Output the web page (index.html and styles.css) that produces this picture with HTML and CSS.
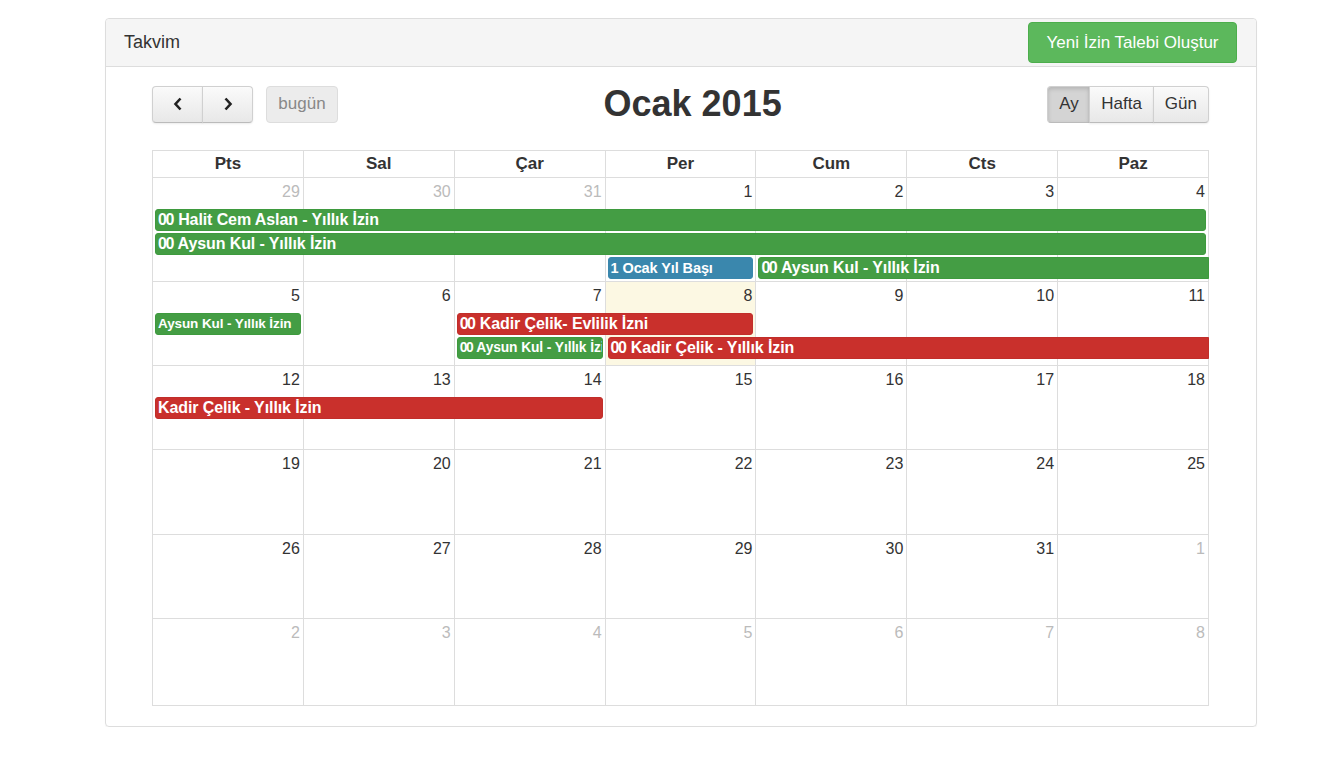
FILE: index.html
```html
<!DOCTYPE html>
<html lang="tr">
<head>
    <meta charset="UTF-8">
    <title>Takvim</title>
    <link rel="stylesheet" href="styles.css">
</head>
<body>
    <div class="panel">
        <div class="panel-heading">
            <span class="panel-title">Takvim</span>
            <button class="btn-new">Yeni İzin Talebi Oluştur</button>
        </div>
        <div class="panel-body">
            <div class="toolbar">
                <div class="tb-left">
                    <div class="btn-group">
                        <button class="fc-btn arrow"><svg width="10" height="14" viewBox="0 0 10 14"><path d="M7.5 1.5 L2.5 7 L7.5 12.5" fill="none" stroke="#222" stroke-width="2.6"/></svg></button>
                        <button class="fc-btn arrow"><svg width="10" height="14" viewBox="0 0 10 14"><path d="M2.5 1.5 L7.5 7 L2.5 12.5" fill="none" stroke="#222" stroke-width="2.6"/></svg></button>
                    </div>
                    <button class="fc-btn disabled">bugün</button>
                </div>
                <h2 class="fc-title">Ocak 2015</h2>
                <div class="btn-group">
                    <button class="fc-btn active">Ay</button>
                    <button class="fc-btn">Hafta</button>
                    <button class="fc-btn">Gün</button>
                </div>
            </div>

            <div class="calendar">
                <div class="day-head">
                    <div>Pts</div><div>Sal</div><div>Çar</div><div>Per</div><div>Cum</div><div>Cts</div><div>Paz</div>
                </div>

                <div class="week first">
                    <div class="day other">29</div>
                    <div class="day other">30</div>
                    <div class="day other">31</div>
                    <div class="day">1</div>
                    <div class="day">2</div>
                    <div class="day">3</div>
                    <div class="day">4</div>
                    <div class="event green" style="grid-row: 2; grid-column: 1 / span 7"><span class="time">00</span> Halit Cem Aslan - Yıllık İzin</div>
                    <div class="event green" style="grid-row: 3; grid-column: 1 / span 7"><span class="time">00</span> Aysun Kul - Yıllık İzin</div>
                    <div class="event blue mid" style="grid-row: 4; grid-column: 4 / span 1">1 Ocak Yıl Başı</div>
                    <div class="event green cont" style="grid-row: 4; grid-column: 5 / span 3"><span class="time">00</span> Aysun Kul - Yıllık İzin</div>
                </div>

                <div class="week">
                    <div class="day">5</div>
                    <div class="day">6</div>
                    <div class="day">7</div>
                    <div class="day today">8</div>
                    <div class="day">9</div>
                    <div class="day">10</div>
                    <div class="day">11</div>
                    <div class="event green small" style="grid-row: 2; grid-column: 1 / span 1">Aysun Kul - Yıllık İzin</div>
                    <div class="event red" style="grid-row: 2; grid-column: 3 / span 2"><span class="time">00</span> Kadir Çelik- Evlilik İzni</div>
                    <div class="event green narrow" style="grid-row: 3; grid-column: 3 / span 1"><span class="time">00</span> Aysun Kul - Yıllık İzin</div>
                    <div class="event red cont" style="grid-row: 3; grid-column: 4 / span 4"><span class="time">00</span> Kadir Çelik - Yıllık İzin</div>
                </div>

                <div class="week">
                    <div class="day">12</div>
                    <div class="day">13</div>
                    <div class="day">14</div>
                    <div class="day">15</div>
                    <div class="day">16</div>
                    <div class="day">17</div>
                    <div class="day">18</div>
                    <div class="event red" style="grid-row: 2; grid-column: 1 / span 3">Kadir Çelik - Yıllık İzin</div>
                </div>

                <div class="week tall">
                    <div class="day">19</div>
                    <div class="day">20</div>
                    <div class="day">21</div>
                    <div class="day">22</div>
                    <div class="day">23</div>
                    <div class="day">24</div>
                    <div class="day">25</div>
                </div>

                <div class="week">
                    <div class="day">26</div>
                    <div class="day">27</div>
                    <div class="day">28</div>
                    <div class="day">29</div>
                    <div class="day">30</div>
                    <div class="day">31</div>
                    <div class="day other">1</div>
                </div>

                <div class="week last">
                    <div class="day other">2</div>
                    <div class="day other">3</div>
                    <div class="day other">4</div>
                    <div class="day other">5</div>
                    <div class="day other">6</div>
                    <div class="day other">7</div>
                    <div class="day other">8</div>
                </div>
            </div>
        </div>
    </div>
</body>
</html>
```

FILE: styles.css
```css
body {
    margin: 0;
    background: #fff;
    font-family: "Liberation Sans", Arial, sans-serif;
    color: #333;
}

.panel {
    width: 1150px;
    margin: 18px 0 0 105px;
    border: 1px solid #ddd;
    border-radius: 4px;
    box-shadow: 0 1px 1px rgba(0,0,0,0.05);
}

.panel-heading {
    display: flex;
    justify-content: space-between;
    align-items: center;
    height: 47px;
    padding: 0 19px 0 18px;
    background: #f5f5f5;
    border-bottom: 1px solid #ddd;
    border-radius: 4px 4px 0 0;
}

.panel-title {
    font-size: 18px;
    color: #333;
}

.btn-new {
    height: 41px;
    width: 209px;
    padding: 0;
    background: #5cb85c;
    border: 1px solid #4cae4c;
    border-radius: 4px;
    color: #fff;
    font-family: inherit;
    font-size: 17px;
}

.panel-body {
    padding: 18px 47px 20px 46px;
}

.toolbar {
    display: flex;
    justify-content: space-between;
    align-items: center;
    height: 38px;
    margin-bottom: 27px;
}

.tb-left {
    display: flex;
    gap: 13px;
}

.btn-group {
    display: flex;
}

.fc-btn {
    height: 37px;
    padding: 0 11px;
    background: linear-gradient(#fafafa, #e8e8e8);
    border: 1px solid #d0d0d0;
    border-bottom-color: #bbb;
    font-family: inherit;
    font-size: 17px;
    color: #333;
    box-shadow: inset 0 1px 0 rgba(255,255,255,0.3), 0 1px 2px rgba(0,0,0,0.08);
}

.btn-group .fc-btn {
    border-radius: 0;
    margin-left: -1px;
}

.btn-group .fc-btn:first-child {
    border-radius: 4px 0 0 4px;
    margin-left: 0;
}

.btn-group .fc-btn:last-child {
    border-radius: 0 4px 4px 0;
}

.fc-btn.arrow {
    width: 51px;
    display: flex;
    align-items: center;
    justify-content: center;
}

.fc-btn.disabled {
    width: 72px;
    border-radius: 4px;
    background: #ececec;
    color: #888;
    box-shadow: none;
    border-color: #ddd;
}

.fc-btn.active {
    width: 43px;
    background: #d4d4d4;
    box-shadow: inset 0 2px 4px rgba(0,0,0,0.15);
}

.fc-title {
    margin: 0;
    font-size: 36px;
    font-weight: bold;
    color: #333;
}

.calendar {
    border-left: 1px solid #ddd;
    border-top: 1px solid #ddd;
}

.day-head {
    display: grid;
    grid-template-columns: repeat(7, 1fr);
}

.day-head div {
    height: 26px;
    line-height: 26px;
    text-align: center;
    font-weight: bold;
    font-size: 17px;
    border-right: 1px solid #ddd;
    border-bottom: 1px solid #ddd;
}

.week {
    display: grid;
    grid-template-columns: repeat(7, 1fr);
    grid-template-rows: 30px auto auto auto 1fr;
    min-height: 84px;
}

.week.first {
    grid-template-rows: 30px auto auto auto minmax(2px, 1fr);
}

.week.tall {
    min-height: 85px;
}

.week.last {
    min-height: 87px;
}

.day {
    grid-row: 1 / -1;
    border-right: 1px solid #ddd;
    border-bottom: 1px solid #ddd;
    text-align: right;
    padding: 4px 3px 0 0;
    font-size: 16px;
    line-height: 20px;
}

.day:nth-child(1) { grid-column: 1; }
.day:nth-child(2) { grid-column: 2; }
.day:nth-child(3) { grid-column: 3; }
.day:nth-child(4) { grid-column: 4; }
.day:nth-child(5) { grid-column: 5; }
.day:nth-child(6) { grid-column: 6; }
.day:nth-child(7) { grid-column: 7; }

.day.other {
    color: #bbb;
}

.day.today {
    background: #fcf8e3;
}

.event {
    height: 20px;
    margin: 1px 3px 1px 2px;
    padding: 0 2px;
    border: 1px solid;
    border-radius: 3px;
    color: #fff;
    font-weight: bold;
    font-size: 16px;
    line-height: 20px;
    white-space: nowrap;
    overflow: hidden;
    letter-spacing: -0.1px;
}

.event .time {
    letter-spacing: -1.5px;
    margin-right: 1px;
}

.event.mid {
    font-size: 14.5px;
}

.event.narrow {
    font-size: 13.8px;
}

.event.small {
    font-size: 13.5px;
}

.event.cont {
    margin-right: 0;
    border-top-right-radius: 0;
    border-bottom-right-radius: 0;
}

.green {
    background: #449d44;
    border-color: #3e9a3e;
}

.red {
    background: #c9302c;
    border-color: #c12e2a;
}

.blue {
    background: #3a87ad;
    border-color: #3a87ad;
}
```
